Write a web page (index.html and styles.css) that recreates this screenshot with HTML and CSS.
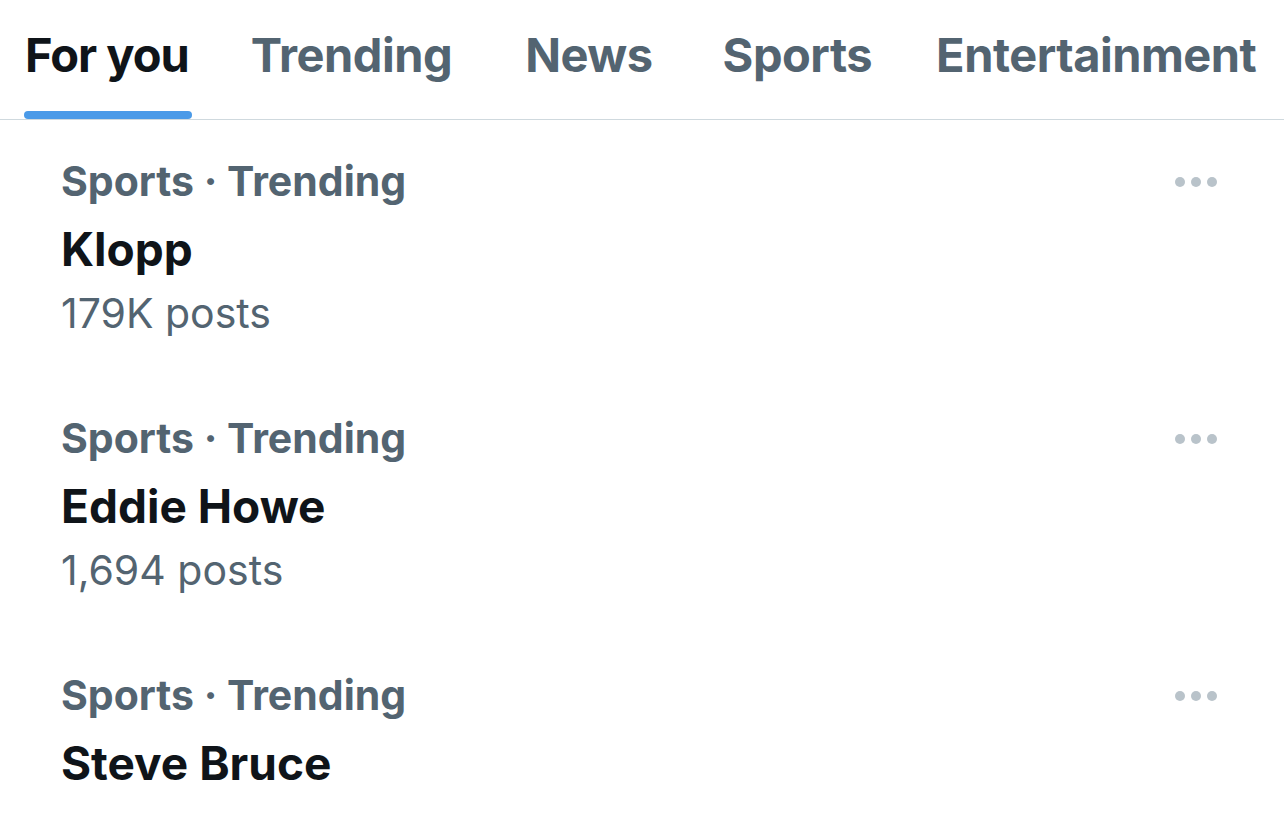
FILE: index.html
```html
<!DOCTYPE html>
<html>
<head>
<meta charset="utf-8">
<link rel="stylesheet" href="styles.css">
</head>
<body>
<nav class="tabs">
  <div class="tab active"><span class="label">For you<span class="indicator"></span></span></div>
  <div class="tab"><span class="label">Trending</span></div>
  <div class="tab"><span class="label">News</span></div>
  <div class="tab"><span class="label">Sports</span></div>
  <div class="tab"><span class="label">Entertainment</span></div>
</nav>
<main class="list">
  <div class="item">
    <div class="content">
      <div class="meta">Sports · Trending</div>
      <div class="title">Klopp</div>
      <div class="count">179K posts</div>
    </div>
    <svg class="more" width="42" height="12" viewBox="0 0 42 12"><circle cx="5" cy="6" r="5"/><circle cx="21" cy="6" r="5"/><circle cx="37" cy="6" r="5"/></svg>
  </div>
  <div class="item">
    <div class="content">
      <div class="meta">Sports · Trending</div>
      <div class="title">Eddie Howe</div>
      <div class="count">1,694 posts</div>
    </div>
    <svg class="more" width="42" height="12" viewBox="0 0 42 12"><circle cx="5" cy="6" r="5"/><circle cx="21" cy="6" r="5"/><circle cx="37" cy="6" r="5"/></svg>
  </div>
  <div class="item">
    <div class="content">
      <div class="meta">Sports · Trending</div>
      <div class="title">Steve Bruce</div>
    </div>
    <svg class="more" width="42" height="12" viewBox="0 0 42 12"><circle cx="5" cy="6" r="5"/><circle cx="21" cy="6" r="5"/><circle cx="37" cy="6" r="5"/></svg>
  </div>
</main>
</body>
</html>
```
FILE: styles.css
```css
html, body {
  margin: 0;
  padding: 0;
  background: #ffffff;
  font-family: Inter, "Noto Sans", sans-serif;
  overflow: hidden;
}
.tabs {
  display: flex;
  height: 119px;
  border-bottom: 1px solid #cfd9de;
  padding-left: 25px;
}
.tab {
  padding-top: 27px;
  font-size: 47px;
  line-height: 56px;
  font-weight: 700;
  letter-spacing: -0.5px;
  color: #536471;
  white-space: nowrap;
}
.tab:nth-child(1) { margin-right: 62px; letter-spacing: -1px; }
.tab:nth-child(2) { margin-right: 73px; }
.tab:nth-child(3) { margin-right: 70px; }
.tab:nth-child(4) { margin-right: 64px; }
.tab.active {
  color: #0f1419;
}
.label {
  position: relative;
  display: inline-block;
}
.indicator {
  position: absolute;
  left: -1px;
  right: -3px;
  top: 84px;
  height: 8px;
  border-radius: 4px;
  background: #4a9ae8;
}
.list {
  display: flex;
  flex-direction: column;
}
.item {
  display: flex;
  align-items: flex-start;
  justify-content: space-between;
  padding: 37px 67px 39px 61px;
}
.content {
  display: flex;
  flex-direction: column;
}
.meta {
  font-size: 41px;
  line-height: 48px;
  font-weight: 650;
  color: #536471;
}
.title {
  margin-top: 17px;
  font-size: 46px;
  line-height: 54px;
  font-weight: 700;
  color: #0f1419;
}
.count {
  margin-top: 12px;
  font-size: 41px;
  line-height: 50px;
  font-weight: 400;
  color: #536471;
}
.more {
  margin-top: 19px;
  fill: #b9c3ca;
}
```
